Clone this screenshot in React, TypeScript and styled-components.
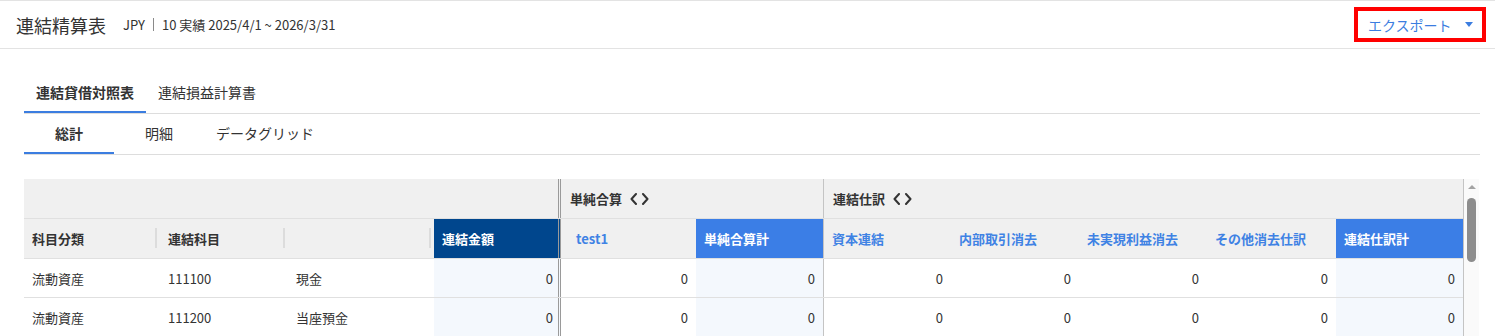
import React from 'react'
import styled, { createGlobalStyle, css } from 'styled-components'

type Divider = 'none' | 'single' | 'double'
type Tone = 'plain' | 'link' | 'dark' | 'accent'

interface Column {
  key: string
  label: string
  width: number
  tone: Tone
  divider?: Divider
  numeric?: boolean
  highlight?: boolean
  handle?: boolean
  indent?: number
}

const columns: Column[] = [
  { key: 'category', label: '科目分類', width: 136, tone: 'plain', handle: true },
  { key: 'code', label: '連結科目', width: 128, tone: 'plain', handle: true },
  { key: 'name', label: '', width: 146, tone: 'plain', handle: true },
  { key: 'total', label: '連結金額', width: 127, tone: 'dark', divider: 'double', numeric: true, highlight: true },
  { key: 'test1', label: 'test1', width: 135, tone: 'link', numeric: true, indent: 15 },
  { key: 'simpleSum', label: '単純合算計', width: 128, tone: 'accent', divider: 'single', numeric: true, highlight: true },
  { key: 'capital', label: '資本連結', width: 127, tone: 'link', numeric: true },
  { key: 'internal', label: '内部取引消去', width: 128, tone: 'link', numeric: true },
  { key: 'unrealized', label: '未実現利益消去', width: 128, tone: 'link', numeric: true },
  { key: 'other', label: 'その他消去仕訳', width: 129, tone: 'link', numeric: true },
  { key: 'journalSum', label: '連結仕訳計', width: 127, tone: 'accent', numeric: true, highlight: true },
]

const groups: { label: string; width: number; divider: Divider; toggle?: boolean }[] = [
  { label: '', width: 537, divider: 'double' },
  { label: '単純合算', width: 263, divider: 'single', toggle: true },
  { label: '連結仕訳', width: 639, divider: 'none', toggle: true },
]

const rows: Record<string, string>[] = [
  { category: '流動資産', code: '111100', name: '現金' },
  { category: '流動資産', code: '111200', name: '当座預金' },
]

const GlobalStyle = createGlobalStyle`
  body {
    margin: 0;
    background: #fff;
    color: #333;
    font-family: "Noto Sans CJK JP", "Noto Sans", sans-serif;
    overflow: hidden;
  }
`

const dividerStyle = (d?: Divider) => {
  if (d === 'double') return css`border-right: 3px double #9a9a9a;`
  if (d === 'single') return css`border-right: 1px solid #c4c4c4;`
  return css``
}

const App: React.FC = () => {
  return (
    <>
      <GlobalStyle />
      <PageHeader>
        <TitleGroup>
          <Title>連結精算表</Title>
          <Meta>
            JPY<MetaDivider />10 実績 2025/4/1 ~ 2026/3/31
          </Meta>
        </TitleGroup>
        <ExportButton>
          エクスポート
          <Caret />
        </ExportButton>
      </PageHeader>

      <Content>
        <TabBar>
          <Tab $active>連結貸借対照表</Tab>
          <Tab>連結損益計算書</Tab>
        </TabBar>
        <TabBar>
          <SubTab $active>総計</SubTab>
          <SubTab>明細</SubTab>
          <SubTab>データグリッド</SubTab>
        </TabBar>

        <TableWrap>
          <Grid>
            <GroupRow>
              {groups.map((g, i) => (
                <GroupCell key={i} $w={g.width} $divider={g.divider}>
                  {g.label}
                  {g.toggle && (
                    <ToggleIcon width="19" height="12" viewBox="0 0 19 12">
                      <polyline points="6,1 1.5,6 6,11" />
                      <polyline points="13,1 17.5,6 13,11" />
                    </ToggleIcon>
                  )}
                </GroupCell>
              ))}
            </GroupRow>
            <HeadRow>
              {columns.map((c) => (
                <HeadCell
                  key={c.key}
                  $w={c.width}
                  $tone={c.tone}
                  $divider={c.divider}
                  $handle={c.handle}
                  $indent={c.indent ?? 8}
                >
                  {c.label}
                </HeadCell>
              ))}
            </HeadRow>
            {rows.map((r, i) => (
              <DataRow key={i}>
                {columns.map((c) => (
                  <DataCell
                    key={c.key}
                    $w={c.width}
                    $numeric={c.numeric}
                    $highlight={c.highlight}
                    $divider={c.divider}
                  >
                    {c.numeric ? '0' : r[c.key]}
                  </DataCell>
                ))}
              </DataRow>
            ))}
          </Grid>
          <Scrollbar>
            <ScrollArrow />
            <ScrollThumb />
          </Scrollbar>
        </TableWrap>
      </Content>
    </>
  )
}

const PageHeader = styled.header`
  display: flex;
  align-items: center;
  justify-content: space-between;
  height: 47px;
  padding: 0 9px 0 16px;
  border-top: 1px solid #e3e3e3;
  border-bottom: 1px solid #e3e3e3;
`
const TitleGroup = styled.div`
  display: flex;
  align-items: center;
  gap: 17px;
`
const Title = styled.h1`
  margin: 0;
  font-size: 18px;
  font-weight: 400;
  color: #333;
  line-height: 1;
`
const Meta = styled.span`
  display: flex;
  align-items: center;
  font-size: 13px;
  color: #333;
`
const MetaDivider = styled.span`
  display: inline-block;
  width: 1px;
  height: 13px;
  background: #8a8a8a;
  margin: 0 8px;
`
const ExportButton = styled.button`
  display: flex;
  align-items: center;
  width: 132px;
  height: 35px;
  padding: 0 0 0 10px;
  box-sizing: border-box;
  border: 4px solid #ff0000;
  background: #fff;
  color: #3b7de0;
  font-family: inherit;
  font-size: 14px;
  cursor: pointer;
`
const Caret = styled.span`
  margin-left: 13px;
  width: 0;
  height: 0;
  border-left: 4px solid transparent;
  border-right: 4px solid transparent;
  border-top: 5px solid #3b7de0;
`

const Content = styled.main`
  padding: 24px 15px 0 24px;
`
const TabBar = styled.nav`
  display: flex;
  border-bottom: 1px solid #dddddd;
`
const Tab = styled.div<{ $active?: boolean }>`
  display: flex;
  align-items: center;
  height: 40px;
  padding: 0 12px;
  box-sizing: border-box;
  font-size: 14px;
  color: #333;
  font-weight: ${(p) => (p.$active ? 700 : 400)};
  border-bottom: 2px solid ${(p) => (p.$active ? '#3b7de0' : 'transparent')};
`
const SubTab = styled(Tab)`
  justify-content: center;
  min-width: 90px;
`

const TableWrap = styled.section`
  display: flex;
  margin-top: 24px;
`
const Grid = styled.div`
  width: 1439px;
  border-right: 1px solid #c4c4c4;
`
const GroupRow = styled.div`
  display: flex;
  height: 40px;
  background: #f0f0f0;
  border-bottom: 1px solid #e0e0e0;
  box-sizing: border-box;
`
const GroupCell = styled.div<{ $w: number; $divider: Divider }>`
  display: flex;
  align-items: center;
  width: ${(p) => p.$w}px;
  box-sizing: border-box;
  padding-left: 9px;
  font-size: 13px;
  font-weight: 700;
  color: #333;
  ${(p) => dividerStyle(p.$divider)}
`
const ToggleIcon = styled.svg`
  margin-left: 8px;
  fill: none;
  stroke: #333;
  stroke-width: 2;
  stroke-linecap: round;
  stroke-linejoin: round;
`
const HeadRow = styled.div`
  display: flex;
  height: 40px;
  background: #f0f0f0;
  border-bottom: 1px solid #e0e0e0;
  box-sizing: border-box;
`
const toneStyles: Record<Tone, ReturnType<typeof css>> = {
  plain: css`color: #333;`,
  link: css`color: #3f82e4;`,
  dark: css`color: #fff; background: #00468d;`,
  accent: css`color: #fff; background: #3b7ee6;`,
}
const HeadCell = styled.div<{ $w: number; $tone: Tone; $divider?: Divider; $handle?: boolean; $indent: number }>`
  position: relative;
  display: flex;
  align-items: center;
  width: ${(p) => p.$w}px;
  box-sizing: border-box;
  padding-left: ${(p) => p.$indent}px;
  font-size: 13px;
  font-weight: 700;
  ${(p) => toneStyles[p.$tone]}
  ${(p) => dividerStyle(p.$divider)}
  ${(p) =>
    p.$handle &&
    css`
      &::after {
        content: '';
        position: absolute;
        right: 3px;
        top: 9px;
        bottom: 10px;
        width: 2px;
        background: #dcdcdc;
      }
    `}
`
const DataRow = styled.div`
  display: flex;
  height: 39px;
  border-bottom: 1px solid #e0e0e0;
  box-sizing: border-box;
`
const DataCell = styled.div<{ $w: number; $numeric?: boolean; $highlight?: boolean; $divider?: Divider }>`
  display: flex;
  align-items: center;
  justify-content: ${(p) => (p.$numeric ? 'flex-end' : 'flex-start')};
  width: ${(p) => p.$w}px;
  box-sizing: border-box;
  padding: ${(p) => (p.$numeric ? `0 ${p.$divider === 'double' ? 5 : 8}px 0 0` : '0 0 0 8px')};
  font-size: 13px;
  color: #333;
  background: ${(p) => (p.$highlight ? '#f4f8fd' : '#fff')};
  ${(p) => dividerStyle(p.$divider)}
`

const Scrollbar = styled.div`
  display: flex;
  flex-direction: column;
  align-items: center;
  width: 15px;
  height: 200px;
  background: #fafafa;
`
const ScrollArrow = styled.span`
  margin-top: 6px;
  width: 0;
  height: 0;
  border-left: 4px solid transparent;
  border-right: 4px solid transparent;
  border-bottom: 4px solid #a3a3a3;
`
const ScrollThumb = styled.span`
  margin-top: 9px;
  width: 9px;
  height: 64px;
  border-radius: 5px;
  background: #8d8d8d;
`

export default App
